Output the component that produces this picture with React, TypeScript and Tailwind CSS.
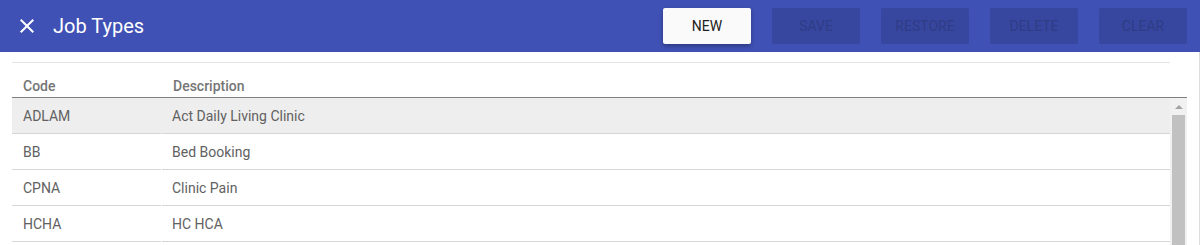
const font = { fontFamily: "Roboto, 'Liberation Sans', sans-serif" }

const rows = [
  { code: 'ADLAM', description: 'Act Daily Living Clinic', selected: true },
  { code: 'BB', description: 'Bed Booking' },
  { code: 'CPNA', description: 'Clinic Pain' },
  { code: 'HCHA', description: 'HC HCA' },
]

function CloseIcon() {
  return (
    <svg width="24" height="24" viewBox="0 0 24 24" fill="#ffffff">
      <path d="M19 6.41L17.59 5 12 10.59 6.41 5 5 6.41 10.59 12 5 17.59 6.41 19 12 13.41 17.59 19 19 17.59 13.41 12z" />
    </svg>
  )
}

function ToolButton({ label, enabled }: { label: string; enabled?: boolean }) {
  return enabled ? (
    <button className="w-[88px] h-[36px] rounded-[2px] bg-[#fafafa] text-[14px] text-[#212121] uppercase shadow-[0_2px_4px_rgba(0,0,0,0.3)]">
      {label}
    </button>
  ) : (
    <button className="w-[88px] h-[36px] rounded-[2px] bg-[#37479f] text-[14px] text-[#2f3c86] uppercase" disabled>
      {label}
    </button>
  )
}

export default function App() {
  return (
    <div className="w-[1200px] h-[245px] overflow-hidden bg-white" style={font}>
      <header className="h-[52px] bg-[#3f51b5] flex items-center pl-[15px] pr-[13px]">
        <CloseIcon />
        <h1 className="ml-[14px] text-[20px] text-white leading-none">Job Types</h1>
        <div className="ml-auto flex gap-[21px]">
          <ToolButton label="New" enabled />
          <ToolButton label="Save" />
          <ToolButton label="Restore" />
          <ToolButton label="Delete" />
          <ToolButton label="Clear" />
        </div>
      </header>

      <div className="h-[193px] border-r border-[#dcdcdc] pl-[12px] pr-[12px] pt-[10px]">
        <div className="w-[1158px] border-t border-[#e4e4e4]" />
        <div className="w-[1175px] h-[35px] flex items-end pb-[1px] border-b border-[#808080] text-[14px] font-medium text-[#757575] leading-[20px]">
          <div className="w-[149px] pl-[11px]">Code</div>
          <div className="pl-[11px] ml-[1px]">Description</div>
        </div>
        <div className="w-[1175px] flex">
          <div className="w-[1158px]">
            {rows.map((r) => (
              <div
                key={r.code}
                className={`grid grid-cols-[149px_1fr] gap-x-[1px] h-[36px] text-[14px] text-[#616161] ${r.selected ? 'bg-[#eeeeee]' : ''}`}
              >
                <div className="flex items-center pt-[1px] pl-[11px] border-b border-[#d6d6d6]">{r.code}</div>
                <div className="flex items-center pt-[1px] pl-[10px] border-b border-[#d6d6d6]">{r.description}</div>
              </div>
            ))}
          </div>
          <div className="w-[17px] h-[160px] bg-[#f1f1f1] flex flex-col items-center">
            <div className="h-[17px] w-full flex items-center justify-center">
              <svg width="8" height="4" viewBox="0 0 8 4">
                <path d="M4 0L8 4H0z" fill="#a3a3a3" />
              </svg>
            </div>
            <div className="w-[13px] flex-1 bg-[#c1c1c1]" />
          </div>
        </div>
      </div>
    </div>
  )
}
